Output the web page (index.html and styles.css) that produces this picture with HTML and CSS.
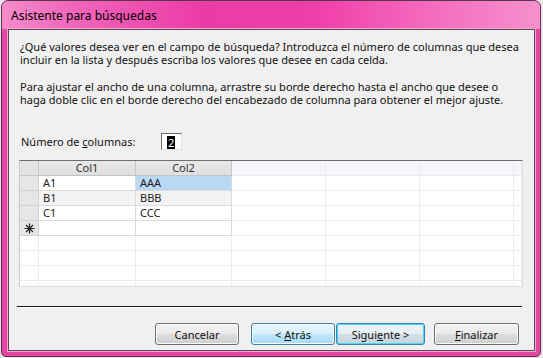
FILE: index.html
```html
<!DOCTYPE html>
<html lang="es">

<head>
    <meta charset="UTF-8">
    <title>Asistente para búsquedas</title>
    <link rel="stylesheet" href="styles.css">
</head>

<body>
    <div class="window">
        <div class="titlebar">Asistente para búsquedas</div>
        <div class="client">
            <p class="intro">¿Qué valores desea ver en el campo de búsqueda? Introduzca el número de columnas que desea incluir en la lista y después escriba los valores que desee en cada celda.</p>
            <p class="intro">Para ajustar el ancho de una columna, arrastre su borde derecho hasta el ancho que desee o haga doble clic en el borde derecho del encabezado de columna para obtener el mejor ajuste.</p>

            <div class="count-row">
                <span class="count-label">Número de <u>c</u>olumnas:</span>
                <span class="count-box"><span class="count-sel">2</span></span>
            </div>

            <div class="sheet">
                <!-- cabecera -->
                <div class="corner"></div>
                <div class="hd">Col1</div>
                <div class="hd">Col2</div>
                <div class="hd-empty"></div>
                <div class="hd-empty"></div>
                <div class="hd-empty"></div>
                <div class="hd-empty"></div>
                <!-- filas -->
                <div class="rh"></div>
                <div class="cell">A1</div>
                <div class="cell sel">AAA</div>
                <div class="blank"></div>
                <div class="blank"></div>
                <div class="blank"></div>
                <div class="blank"></div>

                <div class="rh"></div>
                <div class="cell alt">B1</div>
                <div class="cell alt">BBB</div>
                <div class="blank"></div>
                <div class="blank"></div>
                <div class="blank"></div>
                <div class="blank"></div>

                <div class="rh"></div>
                <div class="cell">C1</div>
                <div class="cell">CCC</div>
                <div class="blank"></div>
                <div class="blank"></div>
                <div class="blank"></div>
                <div class="blank"></div>

                <div class="rh new-row">
                    <svg width="11" height="11" viewBox="0 0 11 11">
                        <path d="M5.5 0.5v10M0.5 5.5h10M2 2l7 7M9 2l-7 7" stroke="#222" stroke-width="1.2" fill="none" />
                    </svg>
                </div>
                <div class="cell"></div>
                <div class="cell"></div>
                <div class="blank"></div>
                <div class="blank"></div>
                <div class="blank"></div>
                <div class="blank"></div>

                <div class="blank"></div>
                <div class="blank"></div>
                <div class="blank"></div>
                <div class="blank"></div>
                <div class="blank"></div>
                <div class="blank"></div>
                <div class="blank"></div>

                <div class="blank"></div>
                <div class="blank"></div>
                <div class="blank"></div>
                <div class="blank"></div>
                <div class="blank"></div>
                <div class="blank"></div>
                <div class="blank"></div>

                <div class="blank"></div>
                <div class="blank"></div>
                <div class="blank"></div>
                <div class="blank"></div>
                <div class="blank"></div>
                <div class="blank"></div>
                <div class="blank"></div>

                <div class="blank"></div>
                <div class="blank"></div>
                <div class="blank"></div>
                <div class="blank"></div>
                <div class="blank"></div>
                <div class="blank"></div>
                <div class="blank"></div>
            </div>

            <div class="separator"></div>

            <div class="buttons">
                <button class="btn btn-cancel">Cancelar</button>
                <button class="btn btn-back hover">&lt; <u>A</u>trás</button>
                <button class="btn btn-next default">Sigui<u>e</u>nte &gt;</button>
                <button class="btn btn-finish"><u>F</u>inalizar</button>
            </div>
        </div>
    </div>
</body>

</html>
```

FILE: styles.css
```css
* {
    margin: 0;
    padding: 0;
    box-sizing: border-box;
}

body {
    background: #e9e4e7;
    font-family: "Noto Sans", "Open Sans", sans-serif;
    font-size: 11px;
    color: #111;
}

/* ventana */
.window {
    width: 540px;
    height: 357px;
    margin-left: 1px;
    border: 1px solid #5a3550;
    border-radius: 7px 7px 5px 5px;
    background: #e545a3;
    padding: 0 5px 5px 6px;
    display: flex;
    flex-direction: column;
}

.titlebar {
    height: 28px;
    margin: 0 -5px 0 -6px;
    padding-left: 9px;
    display: flex;
    align-items: center;
    font-size: 12px;
    color: #000;
    border-radius: 6px 6px 0 0;
    background: linear-gradient(to right, #f58bcb 0%, #f064b9 14%, #ec3aa6 38%, #f03ea9 58%, #f46cbf 80%, #f590cd 100%);
}

.client {
    flex: 1;
    background: #f0f0f0;
    border: 1px solid #5c4656;
    box-shadow: 0 0 0 1px #f4a6d3;
    padding: 10px 0 0 10px;
    display: flex;
    flex-direction: column;
}

.intro {
    line-height: 13px;
    margin-left: 1px;
    width: 505px;
}

.intro + .intro {
    margin-top: 14px;
}

/* numero de columnas */
.count-row {
    margin-top: 27px;
    margin-left: 2px;
    display: flex;
    align-items: center;
    height: 17px;
}

.count-label {
    width: 140px;
}

.count-box {
    width: 21px;
    height: 17px;
    background: #fff;
    border: 1px solid;
    border-color: #6a6a6a #e2e2e2 #e2e2e2 #6a6a6a;
    padding: 1px 0 0 5px;
}

.count-sel {
    display: inline-block;
    background: #000;
    color: #fff;
    line-height: 13px;
    padding: 0 1px;
}

/* hoja de datos */
.sheet {
    margin-top: 10px;
    width: 504px;
    height: 127px;
    overflow: hidden;
    background: #fff;
    border-top: 1px solid #6e6e6e;
    border-left: 1px solid #c9c9c9;
    border-right: 1px solid #dedede;
    border-bottom: 1px solid #dedede;
    display: grid;
    grid-template-columns: 19px 97px 96px 94px 94px 94px 8px;
    grid-auto-rows: 15px;
}

.sheet > div {
    border-right: 1px solid #ececec;
    border-bottom: 1px solid #ececec;
    line-height: 14px;
    white-space: nowrap;
    overflow: hidden;
}

.sheet > .corner {
    background: #e3e3e3;
    border-color: #c6c6c6;
}

.sheet > .hd {
    background: linear-gradient(#e9e9e9, #dedede);
    border-color: #c4c4c4;
    text-align: center;
    color: #333;
}

.sheet > .hd-empty {
    background: #f4f6fa;
    border-color: #eaecf0;
}

.sheet > .rh {
    background: #e6e6e6;
    border-color: #d2d2d2;
}

.sheet > .new-row {
    display: flex;
    align-items: center;
    justify-content: center;
}

.sheet > .cell {
    padding-left: 4px;
    border-color: #dadada;
    color: #222;
}

.sheet > .alt {
    background: #f3f3f3;
}

.sheet > .sel {
    background: #b9d8f3;
}

.separator {
    margin: 19px 12px 0 -2px;
    height: 2px;
    border-top: 1px solid #1a1a1a;
    border-bottom: 1px solid #fff;
}

/* botones */
.buttons {
    margin-top: 15px;
    margin-right: 15px;
    display: flex;
    justify-content: flex-end;
}

.btn {
    height: 22px;
    font-family: inherit;
    font-size: 11px;
    color: #111;
    border: 1px solid #707070;
    border-radius: 3px;
    background: linear-gradient(#f2f2f2 0%, #ebebeb 48%, #dddddd 52%, #cfcfcf 100%);
    box-shadow: inset 0 0 0 1px #fbfbfb;
}

.btn-cancel {
    width: 84px;
}

.btn-back {
    width: 84px;
    margin-left: 12px;
}

.btn-next {
    width: 89px;
    margin-left: 1px;
}

.btn-finish {
    width: 85px;
    margin-left: 9px;
}

.btn.hover {
    border-color: #3c7fb1;
    background: linear-gradient(#eaf6fd 0%, #d9f0fc 48%, #bee6fd 52%, #a7d9f5 100%);
}

.btn.default {
    border-color: #3c7fb1;
    box-shadow: inset 0 0 0 1px #48d6fb;
    background: linear-gradient(#eef5f8 0%, #e6eef2 48%, #d4dfe5 52%, #c6d5dc 100%);
}
```
